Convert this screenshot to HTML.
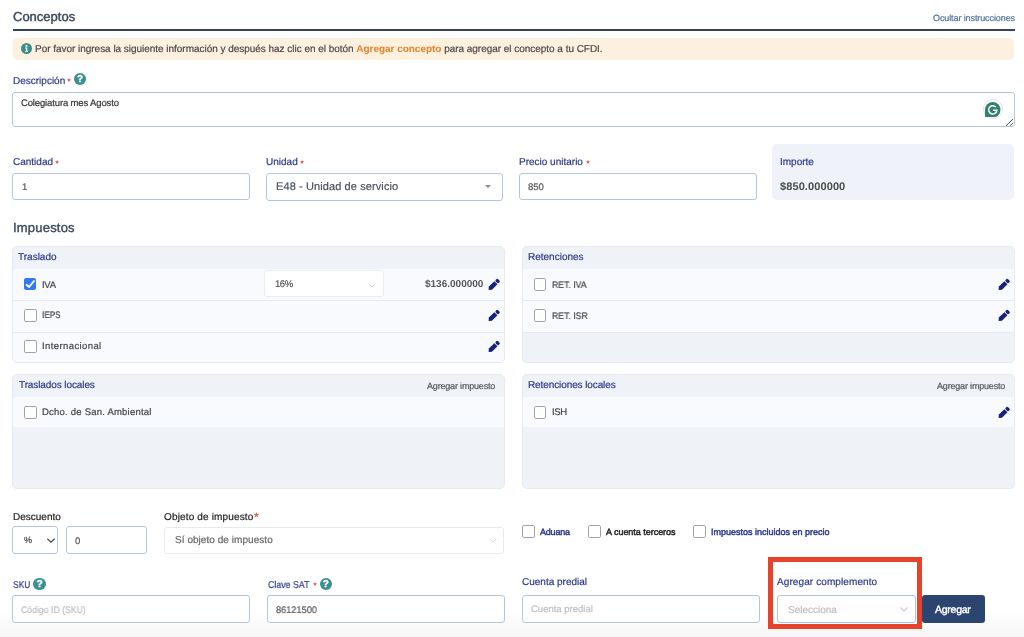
<!DOCTYPE html>
<html><head><meta charset="utf-8">
<style>
html,body{margin:0;padding:0;background:#fff;width:1024px;height:637px;overflow:hidden;position:relative;}
*{box-sizing:border-box;}
.t{will-change:transform;text-rendering:geometricPrecision;-webkit-text-stroke-width:0.2px;position:absolute;font-family:"Liberation Sans",sans-serif;line-height:1;white-space:pre;font-size:10px;}
.b{position:absolute;}
.nv{color:#2d3a8a;}
.inp{position:absolute;border:1px solid #b4c6de;border-radius:3px;background:#fff;}
.pan{position:absolute;background:#eff2f7;border-radius:5px;border:1px solid #e7eaf0;}
.row{position:absolute;left:0;right:0;background:#f9fafd;}
.sep{position:absolute;left:0;right:0;height:1px;background:#e6e9ef;}
.cb{position:absolute;width:12.7px;height:12.7px;border:1.2px solid #a3a3a3;border-radius:1.8px;background:#fff;}
.pen{position:absolute;width:12.6px;height:12.6px;}
.req{position:absolute;color:#e0463a;font-family:"Liberation Sans",sans-serif;font-size:7px;line-height:1;}
.help{position:absolute;width:12.3px;height:12.3px;border-radius:50%;background:#3a8f91;color:#fff;font-family:"Liberation Sans",sans-serif;font-weight:700;font-size:10px;line-height:13px;text-align:center;-webkit-text-stroke:0.35px #fff;text-rendering:geometricPrecision;}
</style></head><body>

<div class="b" style="left:0;top:612px;width:1024px;height:25px;background:linear-gradient(rgba(245,245,245,0),#f5f5f5)"></div>
<!-- Header -->
<div class="t" style="left:12.5px;top:10px;font-size:13px;font-weight:400;-webkit-text-stroke:0.4px #364558;color:#364558;letter-spacing:0px">Conceptos</div>
<div class="t" style="left:932.7px;top:14px;font-size:9px;color:#4d6f9c;letter-spacing:-0.1px">Ocultar instrucciones</div>
<div class="b" style="left:12.5px;top:29px;width:1002px;height:2px;background:#354257"></div>

<!-- Banner -->
<div class="b" style="left:12.5px;top:37.5px;width:1001.5px;height:22px;background:#fdf0df;border-radius:5px"></div>
<svg class="b" style="left:20.5px;top:43px" width="11" height="11" viewBox="0 0 11 11"><circle cx="5.5" cy="5.5" r="5.5" fill="#3b8e8e"/><circle cx="5.5" cy="2.9" r="1.05" fill="#fff"/><path d="M4.2 4.5 H6.3 V7.7 H7 V8.7 H4.2 V7.7 H4.9 V5.5 H4.2 Z" fill="#fff"/></svg>
<div class="t" style="left:34.5px;top:45px;font-size:10px;color:#4a4a4a;letter-spacing:-0.03px">Por favor ingresa la siguiente información y después haz clic en el botón <span style="color:#e5842e;font-weight:700;-webkit-text-stroke-width:0">Agregar concepto</span> para agregar el concepto a tu CFDI.</div>

<!-- Descripcion -->
<div class="t nv" style="left:12.7px;top:76.5px;font-size:10px">Descripción</div>
<svg class="b" style="left:64.3px;top:75.4px" width="10" height="10" viewBox="0 0 10 10"><polygon points="5.00,2.90 5.62,4.15 7.00,4.35 6.00,5.32 6.23,6.70 5.00,6.05 3.77,6.70 4.00,5.32 3.00,4.35 4.38,4.15" fill="#e2604f"/></svg>
<div class="help" style="left:74px;top:73px">?</div>
<div class="inp" style="left:12px;top:92.3px;width:1003px;height:34.8px"></div>
<div class="t" style="left:21.3px;top:98.5px;font-size:9.5px;color:#333;letter-spacing:-0.14px">Colegiatura mes Agosto</div>
<div class="b" style="left:982.7px;top:99.3px;width:20px;height:20px;border-radius:50%;background:#fff;border:1px solid #e3e3ea"></div>
<svg class="b" style="left:985px;top:101.8px" width="15.5" height="15.5" viewBox="0 0 16 16"><path d="M8 0 A8 8 0 0 1 8 16 H0 V8 A8 8 0 0 1 8 0 Z" fill="#32806d"/><path d="M11.3 5.3 A4.3 4.3 0 1 0 12.3 8.6 H8.2" stroke="#fff" stroke-width="1.5" fill="none"/></svg>
<svg class="b" style="left:1005px;top:117px" width="9" height="9" viewBox="0 0 9 9"><path d="M7.7 2.4 L1.2 8.6 M7.9 6.2 L5.2 8.6" stroke="#484848" stroke-width="1" stroke-linecap="round"/></svg>

<!-- Row 2 -->
<div class="t nv" style="left:12.7px;top:158.3px">Cantidad</div>
<svg class="b" style="left:52.1px;top:156.7px" width="10" height="10" viewBox="0 0 10 10"><polygon points="5.00,2.90 5.62,4.15 7.00,4.35 6.00,5.32 6.23,6.70 5.00,6.05 3.77,6.70 4.00,5.32 3.00,4.35 4.38,4.15" fill="#e2604f"/></svg>
<div class="inp" style="left:12px;top:173.2px;width:238px;height:27.2px"></div>
<div class="t" style="left:21.7px;top:182.8px;font-size:9.5px;color:#555">1</div>

<div class="t nv" style="left:266.1px;top:158.3px">Unidad</div>
<svg class="b" style="left:297.4px;top:156.9px" width="10" height="10" viewBox="0 0 10 10"><polygon points="5.00,2.90 5.62,4.15 7.00,4.35 6.00,5.32 6.23,6.70 5.00,6.05 3.77,6.70 4.00,5.32 3.00,4.35 4.38,4.15" fill="#e2604f"/></svg>
<div class="inp" style="left:266px;top:173.2px;width:237px;height:27.4px"></div>
<div class="t" style="left:275.7px;top:182.0px;font-size:11px;color:#4a5260;letter-spacing:0.1px">E48 - Unidad de servicio</div>
<div class="b" style="left:484.5px;top:185px;width:0;height:0;border-left:3.5px solid transparent;border-right:3.5px solid transparent;border-top:3.5px solid #8a8a8a"></div>

<div class="t nv" style="left:519px;top:158.3px">Precio unitario</div>
<svg class="b" style="left:583.4px;top:156.9px" width="10" height="10" viewBox="0 0 10 10"><polygon points="5.00,2.90 5.62,4.15 7.00,4.35 6.00,5.32 6.23,6.70 5.00,6.05 3.77,6.70 4.00,5.32 3.00,4.35 4.38,4.15" fill="#e2604f"/></svg>
<div class="inp" style="left:519px;top:173.2px;width:237.5px;height:27.2px"></div>
<div class="t" style="left:528px;top:182.5px;font-size:9.5px;color:#555">850</div>

<div class="b" style="left:772.3px;top:144px;width:242px;height:56px;background:#eff2f8;border-radius:5px"></div>
<div class="t nv" style="left:779.6px;top:158.3px">Importe</div>
<div class="t" style="left:779.5px;top:181.7px;font-size:11px;font-weight:700;-webkit-text-stroke-width:0;color:#4b4b4b;letter-spacing:0.1px">$850.000000</div>

<!-- Impuestos -->
<div class="t" style="left:12.6px;top:221px;font-size:13px;font-weight:400;-webkit-text-stroke:0.4px #3a4a5c;color:#3a4a5c;letter-spacing:0.2px">Impuestos</div>


<!-- Traslado panel -->
<div class="pan" style="left:12px;top:245.5px;width:492.7px;height:117px;overflow:hidden">
  <div class="row" style="top:22.5px;height:30.5px"></div>
  <div class="sep" style="top:53px"></div>
  <div class="row" style="top:54px;height:31px"></div>
  <div class="sep" style="top:85px"></div>
  <div class="row" style="top:86px;height:31px"></div>
</div>
<div class="t nv" style="left:18.2px;top:253.4px">Traslado</div>
<div class="cb" style="left:23.9px;top:278px;width:12.4px;height:12.4px;background:#3078f4;border-color:#3078f4"></div>
<svg class="b" style="left:23.9px;top:278px" width="12.4" height="12.4" viewBox="0 0 12.4 12.4"><path d="M2.6 6.8 L5.1 9 L10 3" stroke="#fff" stroke-width="1.9" fill="none" stroke-linecap="round" stroke-linejoin="round"/></svg>
<div class="t" style="left:42.3px;top:280.5px;font-size:9.5px;color:#444;letter-spacing:-0.3px">IVA</div>
<div class="b" style="left:264.3px;top:270.3px;width:119.3px;height:27.2px;background:#fff;border:1px solid #eaedf2;border-radius:3px"></div>
<div class="t" style="left:275.3px;top:280px;font-size:9.5px;color:#555;letter-spacing:-0.45px">16%</div>
<svg class="b" style="left:368px;top:282.5px" width="8" height="5" viewBox="0 0 8 5"><path d="M0.5 0.8 L4 4 L7.5 0.8" stroke="#c8c8c8" stroke-width="0.9" fill="none"/></svg>
<div class="t" style="left:424.8px;top:280px;font-weight:700;-webkit-text-stroke-width:0;color:#555">$136.000000</div>
<svg class="pen" style="left:488.3px;top:277.9px" viewBox="0 0 12 12"><g transform="translate(0.6,11.4) rotate(-45)"><path d="M0 0 L2.4 -2.1 H9.8 V2.1 H2.4 Z" fill="#16217a"/><rect x="10.5" y="-2.1" width="3.2" height="4.2" rx="1.3" fill="#16217a"/></g></svg>
<div class="cb" style="left:24px;top:309px"></div>
<div class="t" style="left:42.1px;top:311.3px;font-size:9.5px;color:#444;letter-spacing:0px;transform:scaleX(0.86);transform-origin:0 0">IEPS</div>
<svg class="pen" style="left:488.3px;top:308.9px" viewBox="0 0 12 12"><g transform="translate(0.6,11.4) rotate(-45)"><path d="M0 0 L2.4 -2.1 H9.8 V2.1 H2.4 Z" fill="#16217a"/><rect x="10.5" y="-2.1" width="3.2" height="4.2" rx="1.3" fill="#16217a"/></g></svg>
<div class="cb" style="left:24px;top:340.3px"></div>
<div class="t" style="left:42.4px;top:342.3px;font-size:9.5px;color:#444;letter-spacing:0.4px">Internacional</div>
<svg class="pen" style="left:488.3px;top:339.9px" viewBox="0 0 12 12"><g transform="translate(0.6,11.4) rotate(-45)"><path d="M0 0 L2.4 -2.1 H9.8 V2.1 H2.4 Z" fill="#16217a"/><rect x="10.5" y="-2.1" width="3.2" height="4.2" rx="1.3" fill="#16217a"/></g></svg>

<!-- Retenciones panel -->
<div class="pan" style="left:522px;top:245.5px;width:492.7px;height:117px;overflow:hidden">
  <div class="row" style="top:22.5px;height:30.5px"></div>
  <div class="sep" style="top:53px"></div>
  <div class="row" style="top:54px;height:31px"></div>
  <div class="sep" style="top:85px"></div>
</div>
<div class="t nv" style="left:527.9px;top:253.4px">Retenciones</div>
<div class="cb" style="left:533.5px;top:278px"></div>
<div class="t" style="left:551.8px;top:280.5px;font-size:9.5px;color:#444;letter-spacing:0px;transform:scaleX(0.915);transform-origin:0 0">RET. IVA</div>
<svg class="pen" style="left:997.8px;top:277.9px" viewBox="0 0 12 12"><g transform="translate(0.6,11.4) rotate(-45)"><path d="M0 0 L2.4 -2.1 H9.8 V2.1 H2.4 Z" fill="#16217a"/><rect x="10.5" y="-2.1" width="3.2" height="4.2" rx="1.3" fill="#16217a"/></g></svg>
<div class="cb" style="left:533.5px;top:309px"></div>
<div class="t" style="left:551.8px;top:311.5px;font-size:9.5px;color:#444;letter-spacing:0px;transform:scaleX(0.915);transform-origin:0 0">RET. ISR</div>
<svg class="pen" style="left:997.8px;top:308.9px" viewBox="0 0 12 12"><g transform="translate(0.6,11.4) rotate(-45)"><path d="M0 0 L2.4 -2.1 H9.8 V2.1 H2.4 Z" fill="#16217a"/><rect x="10.5" y="-2.1" width="3.2" height="4.2" rx="1.3" fill="#16217a"/></g></svg>

<!-- Traslados locales -->
<div class="pan" style="left:12px;top:374px;width:492.7px;height:114.7px;overflow:hidden">
  <div class="row" style="top:21.6px;height:30px"></div>
</div>
<div class="t nv" style="left:18.6px;top:381.4px;letter-spacing:-0.1px">Traslados locales</div>
<div class="t" style="left:427.1px;top:381.5px;font-size:9px;color:#555;letter-spacing:-0.18px">Agregar impuesto</div>
<div class="cb" style="left:24px;top:406.2px"></div>
<div class="t" style="left:42.4px;top:407.8px;font-size:9.5px;color:#444;letter-spacing:0.22px">Dcho. de San. Ambiental</div>

<!-- Retenciones locales -->
<div class="pan" style="left:522px;top:374px;width:492.7px;height:114.7px;overflow:hidden">
  <div class="row" style="top:21.6px;height:30px"></div>
</div>
<div class="t nv" style="left:528.2px;top:381.4px;letter-spacing:-0.1px">Retenciones locales</div>
<div class="t" style="left:937px;top:381.5px;font-size:9px;color:#555;letter-spacing:-0.18px">Agregar impuesto</div>
<div class="cb" style="left:533.5px;top:406.2px"></div>
<div class="t" style="left:551.8px;top:407.6px;font-size:9.5px;color:#444;letter-spacing:-0.4px">ISH</div>
<svg class="pen" style="left:997.8px;top:405.9px" viewBox="0 0 12 12"><g transform="translate(0.6,11.4) rotate(-45)"><path d="M0 0 L2.4 -2.1 H9.8 V2.1 H2.4 Z" fill="#16217a"/><rect x="10.5" y="-2.1" width="3.2" height="4.2" rx="1.3" fill="#16217a"/></g></svg>

<!-- Descuento -->
<div class="t" style="left:12.6px;top:512.7px;color:#222">Descuento</div>
<div class="inp" style="left:12.3px;top:526px;width:45.5px;height:27.5px"></div>
<div class="t" style="left:24px;top:536.2px;font-size:9px;color:#444">%</div>
<svg class="b" style="left:46.5px;top:537.6px" width="8" height="5" viewBox="0 0 8 5"><path d="M0.3 0.7 L4 4.2 L7.7 0.7" stroke="#444" stroke-width="1.15" fill="none"/></svg>
<div class="inp" style="left:66.4px;top:526px;width:80.2px;height:27.5px"></div>
<div class="t" style="left:74.8px;top:536.5px;font-size:9.5px;color:#555">0</div>

<div class="t" style="left:164.4px;top:512.7px;color:#222;letter-spacing:0.15px">Objeto de impuesto</div>
<div class="t" style="left:253.6px;top:511.3px;font-size:12px;color:#e0463a">*</div>
<div class="b" style="left:164.4px;top:526.6px;width:340.1px;height:27px;border:1px solid #e8eaef;border-radius:3px;background:#fff"></div>
<div class="t" style="left:174.7px;top:536.3px;color:#666;letter-spacing:0.05px">Sí objeto de impuesto</div>
<svg class="b" style="left:488.5px;top:538px" width="8" height="5" viewBox="0 0 8 5"><path d="M0.5 0.7 L4 4.2 L7.5 0.7" stroke="#d0d0d0" stroke-width="0.9" fill="none"/></svg>

<div class="cb" style="left:522px;top:525.2px"></div>
<div class="t nv" style="left:540px;top:528.4px;font-size:9px;-webkit-text-stroke-width:0.45px;letter-spacing:-0.2px">Aduana</div>
<div class="cb" style="left:588px;top:525.2px"></div>
<div class="t" style="left:606px;top:528.4px;font-size:9px;-webkit-text-stroke-width:0.45px;color:#222;letter-spacing:-0.03px">A cuenta terceros</div>
<div class="cb" style="left:693.4px;top:525.2px"></div>
<div class="t nv" style="left:711.3px;top:528.4px;font-size:9px;-webkit-text-stroke-width:0.45px;letter-spacing:0px">Impuestos incluidos en precio</div>

<!-- SKU row -->
<div class="t nv" style="left:12.5px;top:581.4px;transform:scaleX(0.85);transform-origin:0 0">SKU</div>
<div class="help" style="left:33.4px;top:578px">?</div>
<div class="inp" style="left:12px;top:595.3px;width:238px;height:27.3px"></div>
<div class="t" style="left:21.4px;top:605.5px;font-size:9.5px;color:#bdbdbd;transform:scaleX(0.915);transform-origin:0 0">Código ID (SKU)</div>

<div class="t nv" style="left:267.8px;top:581.4px;transform:scaleX(0.88);transform-origin:0 0">Clave SAT</div>
<svg class="b" style="left:309.7px;top:579.4px" width="10" height="10" viewBox="0 0 10 10"><polygon points="5.00,2.90 5.62,4.15 7.00,4.35 6.00,5.32 6.23,6.70 5.00,6.05 3.77,6.70 4.00,5.32 3.00,4.35 4.38,4.15" fill="#e2604f"/></svg>
<div class="help" style="left:319.6px;top:578px">?</div>
<div class="inp" style="left:267px;top:595.3px;width:238px;height:27.3px"></div>
<div class="t" style="left:276px;top:605.5px;font-size:9.5px;color:#555;transform:scaleX(0.967);transform-origin:0 0">86121500</div>

<div class="t nv" style="left:522.3px;top:578.3px">Cuenta predial</div>
<div class="inp" style="left:522px;top:595.3px;width:238px;height:27.3px"></div>
<div class="t" style="left:531px;top:605.2px;font-size:9.5px;color:#bdbdbd">Cuenta predial</div>

<div class="t nv" style="left:777px;top:578.3px;letter-spacing:0.1px">Agregar complemento</div>
<div class="inp" style="left:777px;top:595.3px;width:138.5px;height:27.7px;border-color:#a9c7ee"></div>
<div class="t" style="left:787.5px;top:606.0px;color:#bdbdbd">Selecciona</div>
<svg class="b" style="left:899.6px;top:607px" width="8" height="5" viewBox="0 0 8 5"><path d="M0.5 0.7 L4 4.2 L7.5 0.7" stroke="#c8c8c8" stroke-width="1.1" fill="none"/></svg>
<div class="b" style="left:922px;top:595.4px;width:63px;height:27.4px;background:#2b4570;border-radius:3px"></div>
<div class="t" style="left:935px;top:604.5px;font-size:10.5px;-webkit-text-stroke-width:0.4px;color:#fff;letter-spacing:-0.25px">Agregar</div>
<div class="b" style="left:768px;top:557.3px;width:154.3px;height:72px;border:5px solid #e7432b"></div>



</body></html>
